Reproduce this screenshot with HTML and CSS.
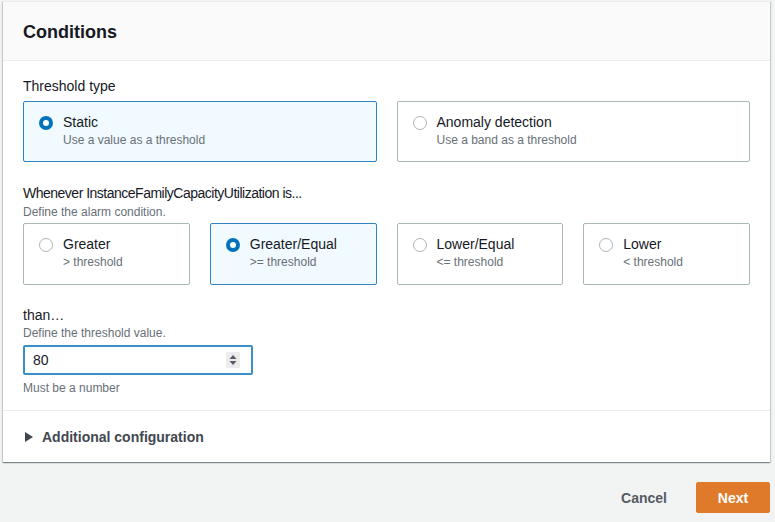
FILE: index.html
```html
<!DOCTYPE html>
<html>
<head>
<meta charset="utf-8">
<link rel="stylesheet" href="styles.css">
</head>
<body>
<div class="page">
  <section class="panel">
    <header class="panel-header"><h2>Conditions</h2></header>
    <div class="panel-body">
      <div class="field">
        <div class="label">Threshold type</div>
        <div class="tiles two">
          <div class="tile selected">
            <span class="radio on"></span>
            <div class="tile-text"><div class="tile-title">Static</div><div class="tile-desc">Use a value as a threshold</div></div>
          </div>
          <div class="tile">
            <span class="radio"></span>
            <div class="tile-text"><div class="tile-title">Anomaly detection</div><div class="tile-desc">Use a band as a threshold</div></div>
          </div>
        </div>
      </div>
      <div class="field">
        <div class="label tight">Whenever InstanceFamilyCapacityUtilization is...</div>
        <div class="desc">Define the alarm condition.</div>
        <div class="tiles four">
          <div class="tile">
            <span class="radio"></span>
            <div class="tile-text"><div class="tile-title">Greater</div><div class="tile-desc">&gt; threshold</div></div>
          </div>
          <div class="tile selected">
            <span class="radio on"></span>
            <div class="tile-text"><div class="tile-title">Greater/Equal</div><div class="tile-desc">&gt;= threshold</div></div>
          </div>
          <div class="tile">
            <span class="radio"></span>
            <div class="tile-text"><div class="tile-title">Lower/Equal</div><div class="tile-desc">&lt;= threshold</div></div>
          </div>
          <div class="tile">
            <span class="radio"></span>
            <div class="tile-text"><div class="tile-title">Lower</div><div class="tile-desc">&lt; threshold</div></div>
          </div>
        </div>
      </div>
      <div class="field last">
        <div class="label">than…</div>
        <div class="desc up">Define the threshold value.</div>
        <div class="input">
          <span class="value">80</span>
          <span class="spinner">
            <svg width="8" height="12" viewBox="0 0 8 12"><path d="M4 1 L7.5 5 L0.5 5 Z M4 11 L7.5 7 L0.5 7 Z" fill="#545b64"/></svg>
          </span>
        </div>
        <div class="hint">Must be a number</div>
      </div>
    </div>
    <div class="panel-expand">
      <svg class="caret" width="8" height="10" viewBox="0 0 8 10"><path d="M0 0 L8 5 L0 10 Z" fill="#414750"/></svg>
      <span>Additional configuration</span>
    </div>
  </section>
  <div class="actions">
    <button class="btn link">Cancel</button>
    <button class="btn primary">Next</button>
  </div>
</div>
</body>
</html>
```
FILE: styles.css
```css
* { box-sizing: border-box; }
html, body { margin: 0; padding: 0; }
body {
  background: #f2f3f3;
  font-family: "Liberation Sans", Arial, sans-serif;
  color: #16191f;
  font-size: 14px;
  line-height: 22px;
}
.page {
  width: 775px;
  height: 522px;
  padding: 1px 5px 0 3px;
}
.panel {
  background: #fff;
  border-top: 1px solid #eaeded;
  box-shadow: 0 1px 1px 0 rgba(0,28,36,.3), 1px 1px 1px 0 rgba(0,28,36,.15), -1px 1px 1px 0 rgba(0,28,36,.15);
}
.panel-header {
  background: #fafafa;
  border-bottom: 1px solid #eaeded;
  padding: 19px 20px 17px;
}
.panel-header h2 {
  margin: 0;
  font-size: 18px;
  line-height: 22px;
  font-weight: 700;
}
.panel-body {
  padding: 14px 20px 14px;
  display: flex;
  flex-direction: column;
  gap: 20px;
}
.field { display: flex; flex-direction: column; }
.field.last { margin-top: -1px; }
.label { font-size: 14px; line-height: 22px; color: #16191f; }
.label.tight { letter-spacing: -0.5px; }
.desc { font-size: 12px; line-height: 16px; color: #687078; }
.desc.up { margin-top: -1px; }
.hint { font-size: 12px; line-height: 16px; color: #687078; margin-top: 5px; }
.tiles { display: grid; gap: 20px; margin-top: 4px; }
.tiles.two { grid-template-columns: 1fr 1fr; }
.tiles.four { grid-template-columns: 1fr 1fr 1fr 1fr; margin-top: 3px; }
.tile {
  border: 1px solid #aab7b8;
  border-radius: 2px;
  background: #fff;
  padding: 10px 15px 13px;
  display: flex;
  align-items: flex-start;
  gap: 10px;
}
.tiles.four .tile { padding-bottom: 14px; }
.tile.selected {
  border-color: #3184c2;
  background: #f1faff;
}
.radio {
  width: 14px;
  height: 14px;
  border-radius: 50%;
  border: 1px solid #aab7b8;
  background: #fff;
  margin-top: 4px;
  flex: none;
}
.radio.on {
  border: 4px solid #0073bb;
  background: #fff;
}
.tile-title { font-size: 14px; line-height: 20px; color: #16191f; }
.tile-desc { font-size: 12px; line-height: 16px; color: #687078; }
.input {
  margin-top: 4px;
  width: 230px;
  height: 30px;
  border: 2px solid #3a8fc9;
  border-radius: 2px;
  display: flex;
  align-items: center;
  justify-content: space-between;
  padding: 0 11px 0 8px;
}
.value { font-size: 14px; color: #16191f; }
.spinner {
  width: 14px;
  height: 16px;
  background: #ececec;
  display: flex;
  align-items: center;
  justify-content: center;
}
.spinner svg { display: block; }
.panel-expand {
  border-top: 1px solid #eaeded;
  height: 52px;
  padding: 0 20px 0 22px;
  display: flex;
  align-items: center;
  gap: 9px;
  font-weight: 700;
  color: #414750;
}
.caret { display: block; }
.actions {
  display: flex;
  justify-content: flex-end;
  align-items: center;
  gap: 8px;
  margin-top: 20px;
}
.btn {
  font-family: inherit;
  font-size: 14px;
  font-weight: 700;
  line-height: 20px;
  border-radius: 2px;
  cursor: pointer;
  height: 31px;
}
.btn.link {
  background: none;
  border: 1px solid transparent;
  color: #545b64;
  padding: 4px 20px;
}
.btn.primary {
  background: #e07a2b;
  border: 1px solid #e07a2b;
  color: #fff;
  width: 74px;
  padding: 4px 0;
}
```
